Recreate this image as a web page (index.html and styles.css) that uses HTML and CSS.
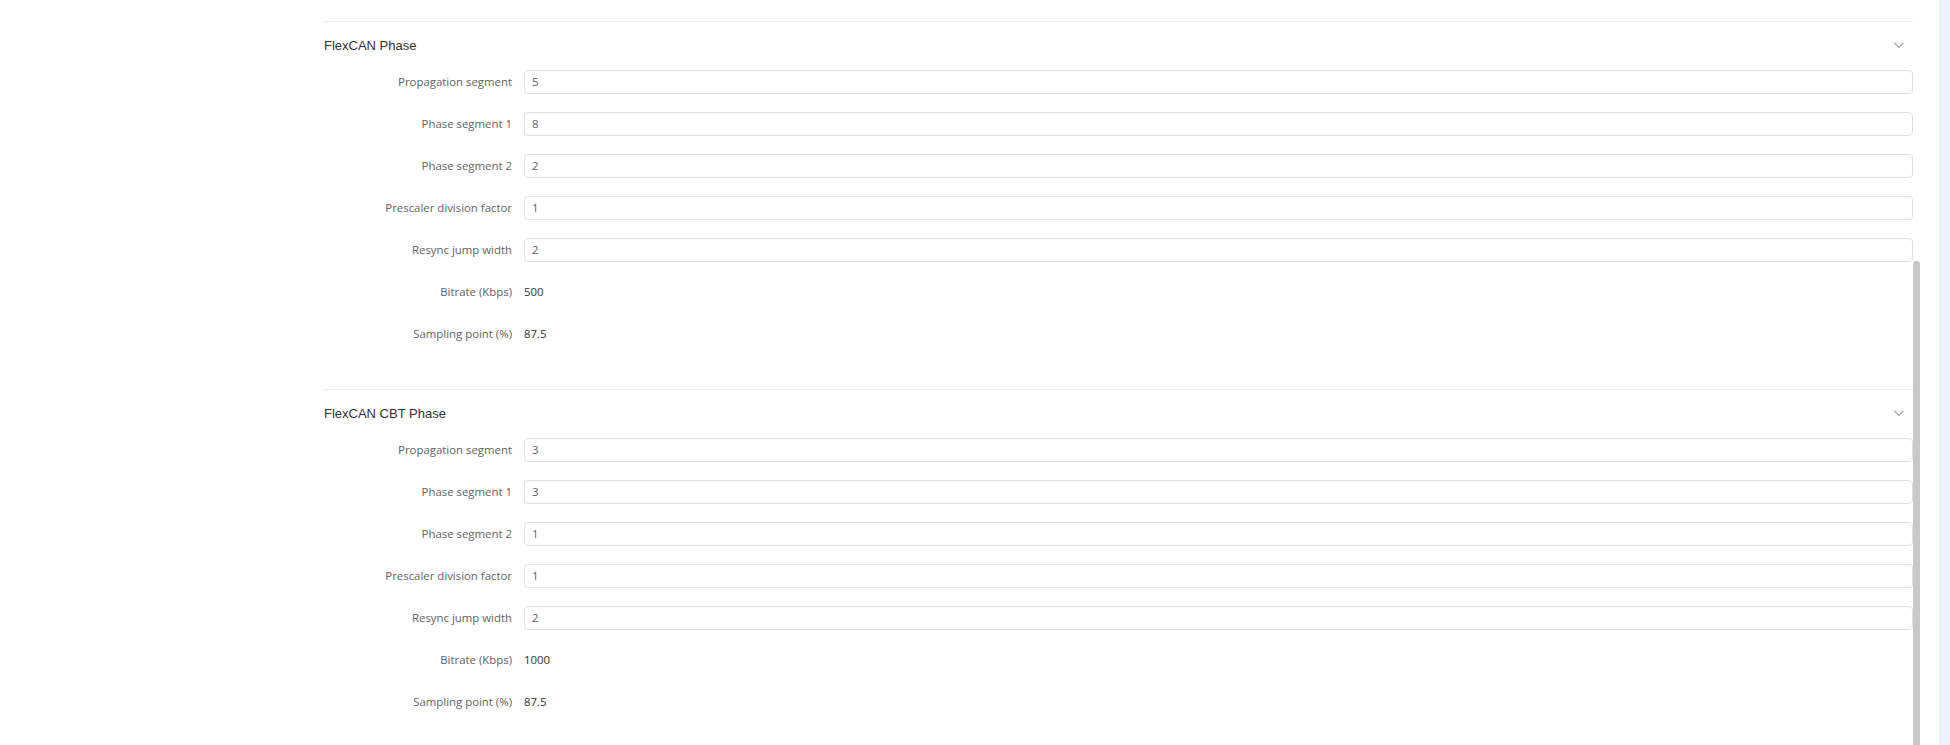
FILE: index.html
```html
<!DOCTYPE html>
<html>
<head>
<meta charset="utf-8">
<link rel="stylesheet" href="styles.css">
</head>
<body>
<div class="page">
  <div class="scroll-area">
    <div class="content">
      <div class="prev-end"></div>

      <div class="collapse-item">
        <div class="collapse-header">
          <span class="collapse-title">FlexCAN Phase</span>
          <svg class="arrow" width="12" height="12" viewBox="0 0 12 12"><polyline points="1.5,4 6,8.5 10.5,4" fill="none" stroke="#606266" stroke-width="1"/></svg>
        </div>
        <div class="collapse-content">
          <div class="form-item"><label class="form-label">Propagation segment</label><div class="input">5</div></div>
          <div class="form-item"><label class="form-label">Phase segment 1</label><div class="input">8</div></div>
          <div class="form-item"><label class="form-label">Phase segment 2</label><div class="input">2</div></div>
          <div class="form-item"><label class="form-label">Prescaler division factor</label><div class="input">1</div></div>
          <div class="form-item"><label class="form-label">Resync jump width</label><div class="input">2</div></div>
          <div class="form-item"><label class="form-label">Bitrate (Kbps)</label><div class="value">500</div></div>
          <div class="form-item"><label class="form-label">Sampling point (%)</label><div class="value">87.5</div></div>
        </div>
      </div>

      <div class="collapse-item">
        <div class="collapse-header">
          <span class="collapse-title">FlexCAN CBT Phase</span>
          <svg class="arrow" width="12" height="12" viewBox="0 0 12 12"><polyline points="1.5,4 6,8.5 10.5,4" fill="none" stroke="#606266" stroke-width="1"/></svg>
        </div>
        <div class="collapse-content">
          <div class="form-item"><label class="form-label">Propagation segment</label><div class="input">3</div></div>
          <div class="form-item"><label class="form-label">Phase segment 1</label><div class="input">3</div></div>
          <div class="form-item"><label class="form-label">Phase segment 2</label><div class="input">1</div></div>
          <div class="form-item"><label class="form-label">Prescaler division factor</label><div class="input">1</div></div>
          <div class="form-item"><label class="form-label">Resync jump width</label><div class="input">2</div></div>
          <div class="form-item"><label class="form-label">Bitrate (Kbps)</label><div class="value">1000</div></div>
          <div class="form-item"><label class="form-label">Sampling point (%)</label><div class="value">87.5</div></div>
        </div>
      </div>
    </div>
    <div class="scrollbar"><div class="thumb"></div></div>
  </div>
  <div class="gutter"></div>
  <div class="side-strip"></div>
</div>
</body>
</html>
```

FILE: styles.css
```css
html, body {
  margin: 0;
  padding: 0;
  background: #ffffff;
  overflow: hidden;
}

.page {
  display: flex;
  width: 1950px;
  height: 745px;
  overflow: hidden;
}

.scroll-area {
  display: flex;
  width: 1920px;
  height: 745px;
  overflow: hidden;
}

.content {
  flex: 1;
  padding-left: 324px;
  min-width: 0;
}

.prev-end {
  height: 21px;
  border-bottom: 1px solid #ebeef5;
}

.collapse-item + .collapse-item {
  border-top: 1px solid #ebeef5;
}

.collapse-header {
  display: flex;
  align-items: center;
  justify-content: space-between;
  box-sizing: border-box;
  height: 48px;
  padding-bottom: 2px;
  font-family: "Liberation Sans", Arial, sans-serif;
  font-size: 13px;
  color: #303133;
}

.arrow {
  margin-right: 8px;
  display: block;
}

.collapse-content {
  padding-bottom: 25px;
}

.form-item {
  display: flex;
  height: 24px;
  margin-bottom: 18px;
  font-family: "Open Sans", "Noto Sans", sans-serif;
  font-size: 11.4px;
}

.form-label {
  width: 200px;
  flex: none;
  box-sizing: border-box;
  padding-right: 12px;
  text-align: right;
  line-height: 24px;
  color: #606266;
}

.input {
  flex: 1;
  box-sizing: border-box;
  height: 24px;
  line-height: 22px;
  border: 1px solid #dcdfe6;
  border-radius: 4px;
  padding: 0 7px;
  color: #606266;
}

.value {
  line-height: 24px;
  color: #303133;
}

.scrollbar {
  width: 7px;
  flex: none;
  display: flex;
  flex-direction: column;
}

.thumb {
  margin-top: 261px;
  flex: 1;
  background: #c8c8cb;
  border-radius: 3px 3px 0 0;
}

.gutter {
  width: 19px;
  flex: none;
}

.side-strip {
  width: 11px;
  flex: none;
  background: #edf3fe;
}
```
